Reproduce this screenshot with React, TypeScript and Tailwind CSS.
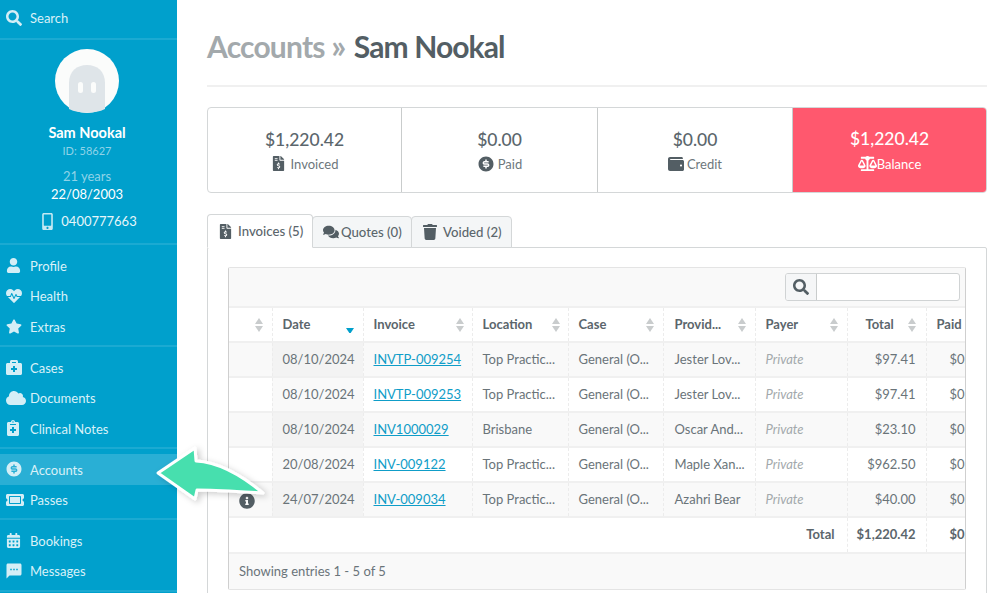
import React from 'react';
import {
    FaSearch,
    FaUser,
    FaHeartbeat,
    FaStar,
    FaBriefcaseMedical,
    FaCloud,
    FaNotesMedical,
    FaTicketAlt,
    FaCalendarAlt,
    FaMobileAlt,
    FaFileInvoiceDollar,
    FaWallet,
    FaBalanceScale,
    FaComments,
    FaTrash,
    FaInfoCircle
} from 'react-icons/fa';
import { RiMoneyDollarCircleFill } from 'react-icons/ri';
import { MdSms } from 'react-icons/md';

const SortIcon: React.FC<{ active?: boolean }> = ({ active }) => (
    <svg width="10" height="16" viewBox="0 0 10 16" className="shrink-0">
        {!active && <path d="M5 1 L9 7 L1 7 Z" fill="#c9cccd" />}
        <path d="M5 15 L9 9 L1 9 Z" fill={active ? '#00a0cc' : '#c9cccd'} transform={active ? 'translate(0 2)' : undefined} />
    </svg>
);

const NavItem: React.FC<{ icon: React.ReactNode; label: string; active?: boolean }> = ({ icon, label, active }) => (
    <div className={`h-[30.5px] pl-[6px] flex items-center text-[13px] text-[#d9f1f8] ${active ? 'bg-[#29afd5]' : ''}`}>
        <span className="w-[16px] flex justify-start text-[#d4eef6] text-[16px] shrink-0">{icon}</span>
        <span className="ml-[8px] mt-[2px]">{label}</span>
    </div>
);

const NavGroup: React.FC<{ children: React.ReactNode; className?: string }> = ({ children, className }) => (
    <div className={`pt-[5px] border-b-2 border-[#1baad2] ${className ?? 'pb-[3.5px]'}`}>{children}</div>
);

const Sidebar: React.FC = () => (
    <aside className="w-[177px] h-[593px] shrink-0 bg-[#00a0cc] overflow-hidden">
        <div className="h-[40px] pl-[6px] pb-[3px] flex items-center border-b-2 border-[#1baad2] text-[13px] text-[#d9f1f8]">
            <FaSearch size={16} className="text-[#d4eef6]" />
            <span className="ml-[8px] mt-[2px]">Search</span>
        </div>
        <div className="h-[205px] pt-[9px] pr-[3px] flex flex-col items-center border-b-2 border-[#1baad2]">
            <svg width="64" height="64" viewBox="0 0 64 64">
                <circle cx="32" cy="32" r="32" fill="#fbfcfb" />
                <path d="M14 60 V34 C14 22 22 16 32 16 C42 16 50 22 50 34 V60 C40 65 24 65 14 60 Z" fill="#dfe5e9" />
                <rect x="23" y="33" width="5" height="11" rx="2.5" fill="#fbfcfb" />
                <rect x="36" y="33" width="5" height="11" rx="2.5" fill="#fbfcfb" />
            </svg>
            <div className="mt-[10px] text-[14.5px] leading-[20px] font-bold text-white">Sam Nookal</div>
            <div className="text-[11px] leading-[16px] text-[#8fd3e8]">ID: 58627</div>
            <div className="mt-[8px] text-[13px] leading-[18px] text-[#8fd3e8]">21 years</div>
            <div className="text-[13px] leading-[18px] text-white">22/08/2003</div>
            <div className="mt-[9px] ml-[2px] flex items-center gap-[5px] text-[13px] text-[#e6f6fa]">
                <FaMobileAlt size={17} className="text-[#c4e9f3]" />
                <span>0400777663</span>
            </div>
        </div>
        <NavGroup>
            <NavItem icon={<FaUser size={15} />} label="Profile" />
            <NavItem icon={<FaHeartbeat size={16} />} label="Health" />
            <NavItem icon={<FaStar size={17} />} label="Extras" />
        </NavGroup>
        <NavGroup>
            <NavItem icon={<FaBriefcaseMedical size={16} />} label="Cases" />
            <NavItem icon={<FaCloud size={20} className="shrink-0" />} label="Documents" />
            <NavItem icon={<FaNotesMedical size={16} className="-ml-[1px]" />} label="Clinical Notes" />
        </NavGroup>
        <NavGroup className="pb-[3px]">
            <NavItem active icon={<RiMoneyDollarCircleFill size={18} className="-ml-[1px] shrink-0" />} label="Accounts" />
            <NavItem icon={<FaTicketAlt size={18} className="shrink-0" />} label="Passes" />
        </NavGroup>
        <NavGroup className="pb-[4px]">
            <NavItem icon={<FaCalendarAlt size={15} />} label="Bookings" />
            <NavItem icon={<MdSms size={18} className="-ml-[1px] shrink-0" />} label="Messages" />
        </NavGroup>
    </aside>
);

const StatCard: React.FC<{ amount: string; label: string; icon: React.ReactNode; width: string; danger?: boolean; gap?: string }> = ({ amount, label, icon, width, danger, gap }) => (
    <div className={`flex flex-col items-center justify-center ${width} ${danger ? 'bg-[#ff586e] text-white' : 'text-[#5b666c] border-r border-[#c9cccc]'}`}>
        <div className="text-[17.5px] leading-[24px] font-medium">{amount}</div>
        <div className={`mt-[3px] flex items-center text-[13px] leading-[18px] ${gap ?? 'gap-[5px]'} ${danger ? 'text-[#fff]' : 'text-[#6d777c]'}`}>
            {icon}
            <span>{label}</span>
        </div>
    </div>
);

const columns = [
    { label: '', width: 'w-[43px]', pad: 'pl-[25px] pr-[8px]' },
    { label: 'Date', width: 'w-[91px]', pad: 'pl-[10px] pr-[8px]' },
    { label: 'Invoice', width: 'w-[109px]', pad: 'pl-[10px] pr-[7px]' },
    { label: 'Location', width: 'w-[96px]', pad: 'pl-[10px] pr-[7px]' },
    { label: 'Case', width: 'w-[95px]', pad: 'pl-[10px] pr-[8px]' },
    { label: 'Provid...', width: 'w-[92px]', pad: 'pl-[11px] pr-[8px]' },
    { label: 'Payer', width: 'w-[92px]', pad: 'pl-[10px] pr-[8px]' },
    { label: 'Total', width: 'w-[79px]', pad: 'pl-[18px] pr-[9px]' },
    { label: 'Paid', width: 'w-[81px]', pad: 'pl-[10px]' }
];

const rows = [
    { date: '08/10/2024', invoice: 'INVTP-009254', location: 'Top Practic...', provider: 'Jester Lov...', total: '$97.41' },
    { date: '08/10/2024', invoice: 'INVTP-009253', location: 'Top Practic...', provider: 'Jester Lov...', total: '$97.41' },
    { date: '08/10/2024', invoice: 'INV1000029', location: 'Brisbane', provider: 'Oscar And...', total: '$23.10' },
    { date: '20/08/2024', invoice: 'INV-009122', location: 'Top Practic...', provider: 'Maple Xan...', total: '$962.50' },
    { date: '24/07/2024', invoice: 'INV-009034', location: 'Top Practic...', provider: 'Azahri Bear', total: '$40.00', info: true }
];

const cellBorder = 'border-r border-dashed border-[#ececec]';

const InvoiceTable: React.FC = () => (
    <div className="border-2 border-[#e4e4e4] border-l-[#cfcfcf] border-r-[#cfcfcf] border-l-1 border-r-1 border-t border-b rounded-[2px] overflow-hidden">
        <div className="h-[40px] bg-[#f9f9f9] border-b-2 border-[#f0f0f0] flex items-center justify-end pr-[5px]">
            <div className="flex h-[28px] w-[175px] border border-[#d0d3d4] rounded-[3px] bg-white overflow-hidden">
                <div className="w-[31px] bg-[#f5f6f7] border-r border-[#c9cccc] flex items-center justify-center text-[#535e64]">
                    <FaSearch size={16} />
                </div>
            </div>
        </div>
        <div className="overflow-hidden">
            <table className="w-[778px] max-w-none table-fixed border-collapse text-[13px] text-[#6a7479]">
                <colgroup>
                    {columns.map((c, i) => <col key={i} className={c.width} />)}
                </colgroup>
                <thead>
                    <tr className="h-[34px] bg-white border-b-2 border-[#f0f0f0] text-[#5b666c]">
                        {columns.map((c, i) => (
                            <th key={i} className={`p-0 font-bold text-left ${i < 8 ? cellBorder : ''}`}>
                                <div className={`flex items-center justify-between ${c.pad}`}>
                                    <span>{c.label}</span>
                                    {i < 8 && <SortIcon active={i === 1} />}
                                </div>
                            </th>
                        ))}
                    </tr>
                </thead>
                <tbody>
                    {rows.map((r, i) => (
                        <tr key={r.invoice} className={`h-[35px] border-b-2 border-[#f0f0f0] ${i % 2 === 0 ? 'bg-[#f9f9f9]' : 'bg-white'}`}>
                            <td className={`p-0 text-center ${cellBorder}`}>
                                {r.info && <FaInfoCircle size={16} className="inline-block text-[#535e64] ml-[-6px] mt-[2px]" />}
                            </td>
                            <td className={`p-0 pl-[10px] ${cellBorder} ${i % 2 === 0 ? 'bg-[#f3f3f3]' : 'bg-[#f9f9f9]'}`}>{r.date}</td>
                            <td className={`p-0 pl-[10px] ${cellBorder}`}><a className="text-[#0f9dc8] underline">{r.invoice}</a></td>
                            <td className={`p-0 pl-[10px] ${cellBorder}`}>{r.location}</td>
                            <td className={`p-0 pl-[10px] ${cellBorder}`}>General (O...</td>
                            <td className={`p-0 pl-[11px] ${cellBorder}`}>{r.provider}</td>
                            <td className={`p-0 pl-[10px] italic text-[#a3a9ac] ${cellBorder}`}>Private</td>
                            <td className={`p-0 pr-[10px] text-right ${cellBorder}`}>{r.total}</td>
                            <td className="p-0 pl-[23px]">$0.00</td>
                        </tr>
                    ))}
                    <tr className="h-[35px] bg-white font-bold text-[#5b666c]">
                        <td colSpan={7} className={`p-0 pr-[12px] text-right ${cellBorder}`}>Total</td>
                        <td className={`p-0 pr-[10px] text-right ${cellBorder}`}>$1,220.42</td>
                        <td className="p-0 pl-[23px]">$0.00</td>
                    </tr>
                </tbody>
            </table>
        </div>
        <div className="h-[37px] bg-[#f9f9f9] border-t-2 border-[#f0f0f0] flex items-center pl-[10px] text-[13px] text-[#6a7479]">
            Showing entries 1 - 5 of 5
        </div>
    </div>
);

const Tab: React.FC<{ icon: React.ReactNode; label: string; active?: boolean; width: string; gap: string }> = ({ icon, label, active, width, gap }) => (
    <div className={`flex items-center pl-[10px] text-[13.2px] border border-[#d4d7d8] rounded-t-[4px] -mr-px font-medium text-[#5b666c] ${width} ${gap} ${active ? 'h-[34px] bg-white border-b-white relative z-10' : 'h-[32px] bg-[#f4f6f7]'}`}>
        {icon}
        <span className="mt-[2px]">{label}</span>
    </div>
);

export default function App() {
    return (
        <div className="relative w-[995px] h-[593px] flex bg-white overflow-hidden font-['Lato',sans-serif]">
            <Sidebar />
            <main className="w-[818px] min-w-0 shrink-0 pl-[30px] pr-[8px]">
                <h1 className="pt-[26px] h-[87px] border-b-2 border-[#f0f0f0] text-[30px] leading-[40px] font-bold tracking-[-0.8px] text-[#a3a9ac]">
                    Accounts <span className="text-[33px] leading-none mr-[2px]">»</span> <span className="text-[#535e64] tracking-[-0.9px]">Sam Nookal</span>
                </h1>
                <div className="mt-[20px] h-[86px] flex border border-[#d4d7d8] rounded-[4px] overflow-hidden">
                    <StatCard width="w-[194px]" amount="$1,220.42" label="Invoiced" icon={<FaFileInvoiceDollar size={15} className="text-[#535e64]" />} />
                    <StatCard width="w-[196px]" amount="$0.00" label="Paid" gap="gap-[3px]" icon={<RiMoneyDollarCircleFill size={18} className="text-[#535e64]" />} />
                    <StatCard width="w-[195px]" amount="$0.00" label="Credit" gap="gap-[3px]" icon={<FaWallet size={16} className="text-[#535e64]" />} />
                    <StatCard width="flex-1" danger gap="gap-0" amount="$1,220.42" label="Balance" icon={<FaBalanceScale size={19} />} />
                </div>
                <div className="mt-[21px] flex items-end h-[34px]">
                    <Tab active width="w-[106px]" gap="gap-[5px]" icon={<FaFileInvoiceDollar size={15} className="text-[#535e64]" />} label="Invoices (5)" />
                    <Tab width="w-[100px]" gap="gap-[2px]" icon={<FaComments size={16} className="text-[#535e64]" />} label="Quotes (0)" />
                    <Tab width="w-[101px]" gap="gap-[5px]" icon={<FaTrash size={16} className="text-[#535e64]" />} label="Voided (2)" />
                </div>
                <div className="-mt-px h-[400px] border border-[#d4d7d8] rounded-[2px] pl-[20px] pr-[20px] pt-[19px]">
                    <InvoiceTable />
                </div>
            </main>
            <svg width="120" height="64" viewBox="0 0 120 64" className="absolute left-[155px] top-[442px] overflow-visible">
                <defs>
                    <filter id="arrowShadow" x="-20%" y="-20%" width="140%" height="150%">
                        <feDropShadow dx="3" dy="2" stdDeviation="3" floodColor="#000" floodOpacity="0.2" />
                    </filter>
                </defs>
                <path
                    d="M3 31 L40 6 L41 19 C62 20 85 32 108 51 C88 50 62 48 42 48 L40 57 Z"
                    fill="#47dfae"
                    stroke="#ffffff"
                    strokeWidth="3"
                    strokeLinejoin="round"
                    filter="url(#arrowShadow)"
                />
            </svg>
        </div>
    );
}
